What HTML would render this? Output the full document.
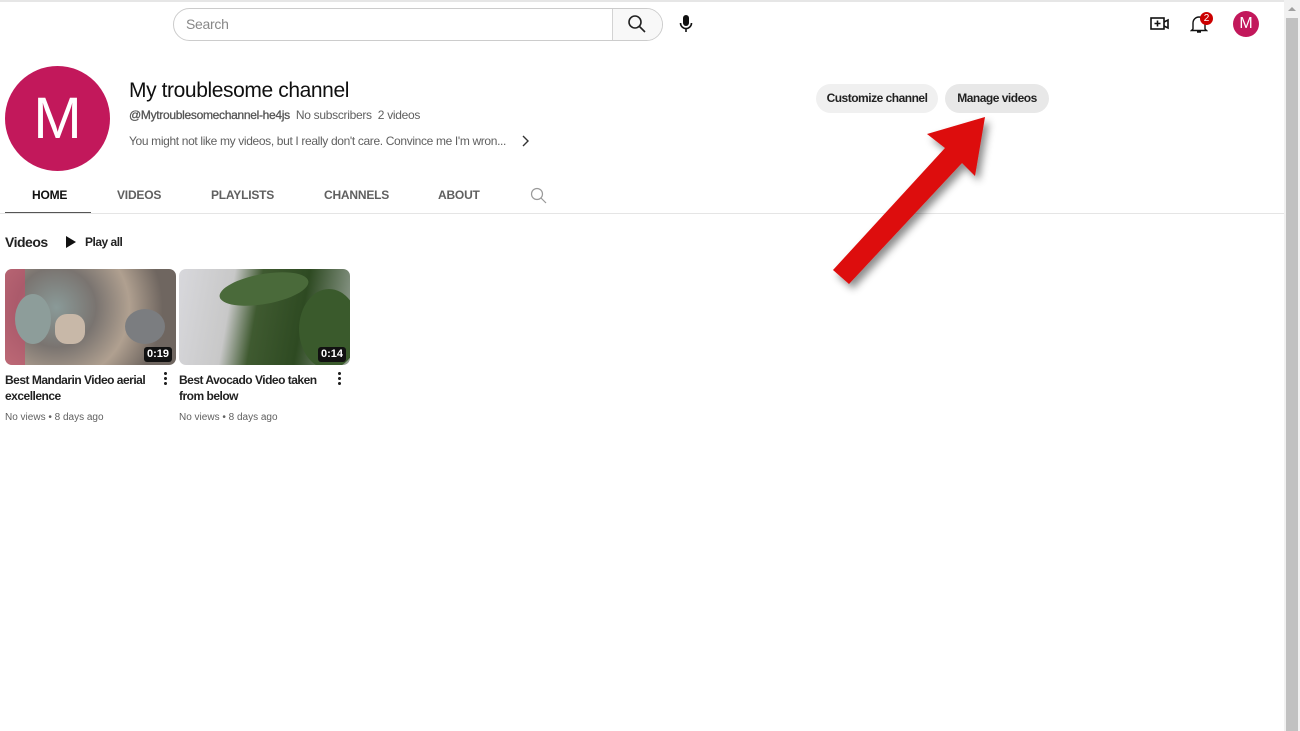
<!DOCTYPE html>
<html><head><meta charset="utf-8"><style>
*{margin:0;padding:0;box-sizing:border-box}
body{width:1300px;height:731px;background:#fff;font-family:"Liberation Sans",Arial,sans-serif;color:#0f0f0f;position:relative;overflow:hidden;letter-spacing:-0.3px}
.a{position:absolute;white-space:nowrap}
</style></head><body>
<div class="a" style="left:0;top:0;width:1284px;height:2px;background:#e6e6e6"></div>
<div class="a" style="left:1284px;top:0;width:16px;height:731px;background:#f1f1f1"></div>
<div class="a" style="left:1286px;top:18px;width:12px;height:713px;background:#c1c1c1"></div>
<div class="a" style="left:1288px;top:7px;width:0;height:0;border-left:4px solid transparent;border-right:4px solid transparent;border-bottom:4px solid #a0a0a0"></div>
<div class="a" style="left:173px;top:8px;width:490px;height:33px;border:1px solid #ccc;border-radius:17px;overflow:hidden">
 <div class="a" style="left:12px;top:7px;font-size:14px;color:#888">Search</div>
 <div class="a" style="left:438px;top:0;width:52px;height:33px;background:#f8f8f8;border-left:1px solid #d3d3d3"></div>
</div>
<svg class="a" style="left:627px;top:14px" width="20" height="20" viewBox="0 0 20 20"><circle cx="8" cy="8" r="6" fill="none" stroke="#222" stroke-width="1.6"/><path d="M12.5 12.5L18 18" stroke="#222" stroke-width="1.6"/></svg>
<svg class="a" style="left:679px;top:14px" width="14" height="20" viewBox="0 0 14 20"><rect x="4" y="1" width="6" height="11" rx="3" fill="#111"/><path d="M1.5 9a5.5 5.5 0 0 0 11 0M7 14.5V18" stroke="#111" stroke-width="1.6" fill="none"/></svg>
<svg class="a" style="left:1150px;top:16px" width="20" height="16" viewBox="0 0 20 16"><rect x="1" y="2" width="13" height="11" fill="none" stroke="#111" stroke-width="1.6"/><path d="M14 6l4-2v8l-4-2M7.5 4.5v6M4.5 7.5h6" stroke="#111" stroke-width="1.6" fill="none"/></svg>
<svg class="a" style="left:1190px;top:14px" width="18" height="20" viewBox="0 0 18 20"><path d="M3 15V9a6 6 0 0 1 12 0v6l1.5 1.5h-15zM7 18h4" stroke="#111" stroke-width="1.4" fill="none"/></svg>
<div class="a" style="left:1200px;top:12px;width:13px;height:13px;border-radius:50%;background:#cc0000;color:#fff;font-size:10px;text-align:center;line-height:13px;letter-spacing:0">2</div>
<div class="a" style="left:1233px;top:11px;width:26px;height:26px;border-radius:50%;background:#c2185b;color:#fff;font-size:16px;text-align:center;line-height:26px;letter-spacing:0">M</div>
<div class="a" style="left:5px;top:66px;width:105px;height:105px;border-radius:50%;background:#c2185b;color:#fff;font-size:58px;text-align:center;line-height:105px;letter-spacing:0">M</div>
<div class="a" style="left:129px;top:79px;font-size:21px;letter-spacing:-0.4px">My troublesome channel</div>
<div class="a" style="left:129px;top:108px;font-size:12px;color:#606060;letter-spacing:-0.3px"><b style="color:#555;font-weight:normal;-webkit-text-stroke:0.3px #555">@Mytroublesomechannel-he4js</b>&nbsp; No subscribers&nbsp; 2 videos</div>
<div class="a" style="left:129px;top:134px;font-size:12px;color:#606060;letter-spacing:-0.35px">You might not like my videos, but I really don't care. Convince me I'm wron...</div>
<svg class="a" style="left:520px;top:135px" width="10" height="12" viewBox="0 0 10 12"><path d="M3 1l5 5-5 5" stroke="#333" stroke-width="1.4" fill="none"/></svg>
<div class="a" style="left:816px;top:84px;width:122px;height:29px;border-radius:15px;background:#f0f0f0;font-size:12px;font-weight:bold;color:#222;text-align:center;line-height:29px;letter-spacing:-0.5px">Customize channel</div>
<div class="a" style="left:945px;top:84px;width:104px;height:29px;border-radius:15px;background:#e8e8e8;font-size:12px;font-weight:bold;color:#222;text-align:center;line-height:29px;letter-spacing:-0.5px">Manage videos</div>
<div class="a" style="top:188px;font-size:12px;font-weight:bold;color:#606060;width:100%;letter-spacing:-0.2px">
<span class="a" style="left:32px;color:#0f0f0f">HOME</span><span class="a" style="left:117px">VIDEOS</span><span class="a" style="left:211px">PLAYLISTS</span><span class="a" style="left:324px">CHANNELS</span><span class="a" style="left:438px">ABOUT</span></div>
<svg class="a" style="left:530px;top:187px" width="17" height="17" viewBox="0 0 17 17"><circle cx="7" cy="7" r="5.5" fill="none" stroke="#999" stroke-width="1.2"/><path d="M11 11l5 5" stroke="#999" stroke-width="1.2"/></svg>
<div class="a" style="left:5px;top:212px;width:86px;height:2px;background:#555"></div>
<div class="a" style="left:0;top:213px;width:1284px;height:1px;background:#e5e5e5"></div>
<div class="a" style="left:5px;top:234px;font-size:14px;font-weight:bold;color:#222;letter-spacing:-0.5px">Videos</div>
<svg class="a" style="left:65px;top:235px" width="12" height="14"><path d="M1 1l10 6-10 6z" fill="#111"/></svg>
<div class="a" style="left:85px;top:235px;font-size:12px;font-weight:bold;color:#222;letter-spacing:-0.5px">Play all</div>
<div class="a" style="left:5px;top:269px;width:171px;height:96px;border-radius:7px;overflow:hidden;background:radial-gradient(circle at 30% 40%,#8a9a98 0,#7a7470 30%,#b0a090 55%,#6f6660 80%),#807570">
 <div class="a" style="left:0;top:0;width:20px;height:96px;background:#c0506a;opacity:.7"></div>
 <div class="a" style="left:10px;top:25px;width:36px;height:50px;border-radius:50%;background:#8d9d9a"></div>
 <div class="a" style="left:120px;top:40px;width:40px;height:35px;border-radius:50%;background:#7b7d80"></div>
 <div class="a" style="left:50px;top:45px;width:30px;height:30px;border-radius:40%;background:#c8b8a8"></div>
</div>
<div class="a" style="left:144px;top:347px;width:28px;height:15px;background:#111;border-radius:3px;color:#fff;font-size:11px;font-weight:bold;text-align:center;line-height:15px;letter-spacing:0">0:19</div>
<div class="a" style="left:179px;top:269px;width:171px;height:96px;border-radius:7px;overflow:hidden;background:linear-gradient(100deg,#d8d8dc 0,#c8c8c8 30%,#3f5a30 45%,#2e4a22 70%,#9aa49a 100%)">
 <div class="a" style="left:40px;top:5px;width:90px;height:30px;border-radius:50%;background:#4a6a3a;transform:rotate(-10deg)"></div>
 <div class="a" style="left:120px;top:20px;width:60px;height:80px;border-radius:50%;background:#3a5a2c"></div>
</div>
<div class="a" style="left:318px;top:347px;width:28px;height:15px;background:#111;border-radius:3px;color:#fff;font-size:11px;font-weight:bold;text-align:center;line-height:15px;letter-spacing:0">0:14</div>
<div class="a" style="left:5px;top:372px;font-size:12px;font-weight:bold;line-height:16px;color:#222;letter-spacing:-0.5px">Best Mandarin Video aerial<br>excellence</div>
<div class="a" style="left:179px;top:372px;font-size:12px;font-weight:bold;line-height:16px;color:#222;letter-spacing:-0.5px">Best Avocado Video taken<br>from below</div>
<div class="a" style="left:164px;top:371px;width:3px;height:14px;background:radial-gradient(circle,#222 1.4px,transparent 1.6px) 0 0/3px 5px"></div>
<div class="a" style="left:338px;top:371px;width:3px;height:14px;background:radial-gradient(circle,#222 1.4px,transparent 1.6px) 0 0/3px 5px"></div>
<div class="a" style="left:5px;top:412px;font-size:10px;color:#606060;letter-spacing:0">No views • 8 days ago</div>
<div class="a" style="left:179px;top:412px;font-size:10px;color:#606060;letter-spacing:0">No views • 8 days ago</div>
<svg class="a" style="left:0;top:0" width="1300" height="731"><defs><filter id="s"><feDropShadow dx="4" dy="5" stdDeviation="4" flood-opacity=".45"/></filter></defs>
<polygon points="985,117 927,134 945,148 833,270 849,284 962,163 975,176" fill="#dd0a0a" filter="url(#s)"/></svg>
</body></html>
